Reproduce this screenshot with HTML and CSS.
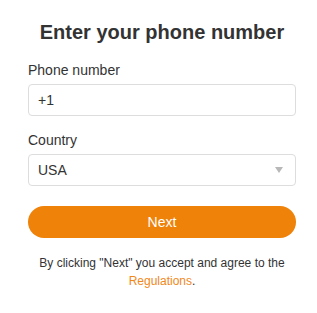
FILE: index.html
```html
<!DOCTYPE html>
<html>
<head>
<meta charset="utf-8">
<link rel="stylesheet" href="styles.css">
</head>
<body>
<div class="card">
  <h1 class="title">Enter your phone number</h1>
  <label class="label" for="phone">Phone number</label>
  <input class="field" id="phone" type="text" value="+1">
  <label class="label label-gap">Country</label>
  <div class="field select">
    <span>USA</span>
    <svg class="caret" width="8" height="6" viewBox="0 0 8 6"><path d="M0 0H8L4 6Z" fill="#b8b8b8"/></svg>
  </div>
  <button class="btn">Next</button>
  <p class="note">By clicking "Next" you accept and agree to the <a class="link" href="#">Regulations</a>.</p>
</div>
</body>
</html>
```
FILE: styles.css
```css
body {
  margin: 8px;
  background: #fff;
  font-family: "Liberation Sans", Arial, sans-serif;
  color: #333;
}
.card {
  width: 301px;
  box-sizing: border-box;
  padding: 13px 13px 15px 20px;
  background: #fff;
  box-shadow: 0 0 8px rgba(0, 0, 0, 0.3);
  display: flex;
  flex-direction: column;
}
.title {
  margin: 0;
  font-size: 20px;
  line-height: 23px;
  font-weight: bold;
  text-align: center;
  color: #333;
}
.label {
  display: block;
  margin-top: 18px;
  margin-bottom: 6px;
  font-size: 14px;
  line-height: 16px;
}
.label-gap {
  margin-top: 16px;
}
.field {
  box-sizing: border-box;
  width: 100%;
  height: 32px;
  margin: 0;
  border: 1px solid #dddddd;
  border-radius: 4px;
  padding: 0 12px 0 9px;
  font-family: inherit;
  font-size: 14px;
  color: #333;
  background: #fff;
  outline: none;
}
.select {
  display: flex;
  align-items: center;
  justify-content: space-between;
}
.caret {
  display: block;
}
.btn {
  margin-top: 20px;
  height: 32px;
  border: none;
  border-radius: 16px;
  background: #ef8209;
  color: #fff;
  font-family: inherit;
  font-size: 14px;
  padding: 0;
}
.note {
  margin: 16px 0 0;
  font-size: 12px;
  line-height: 18px;
  text-align: center;
  color: #333;
}
.link {
  color: #f0881c;
  text-decoration: none;
}
```
